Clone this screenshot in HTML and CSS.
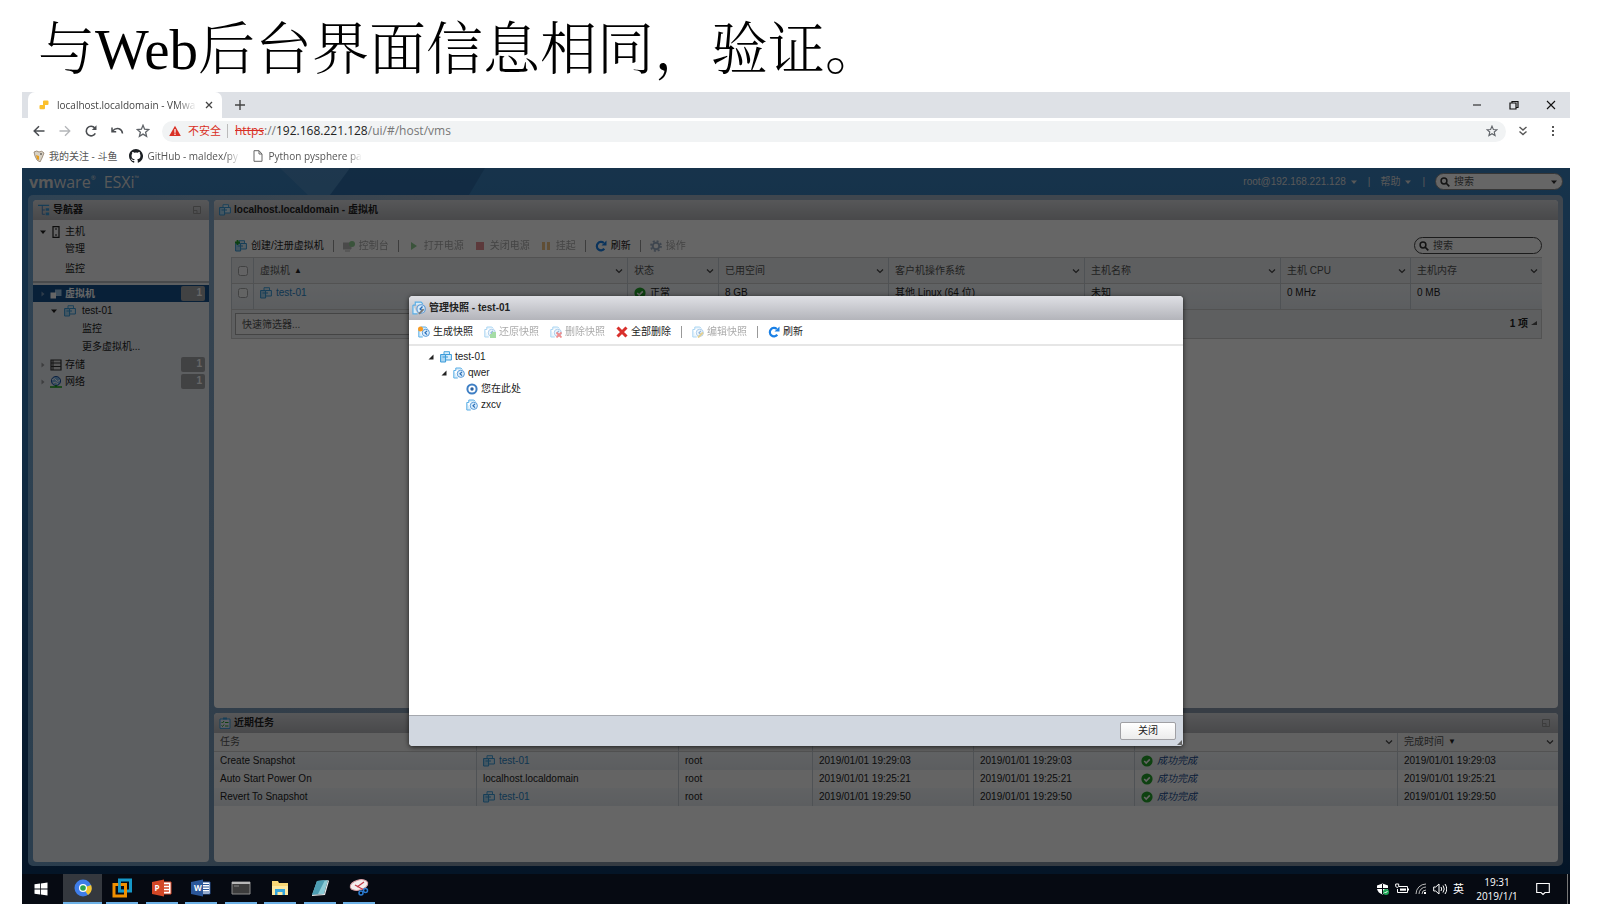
FILE: index.html
```html
<!DOCTYPE html>
<html lang="zh-CN">
<head>
<meta charset="utf-8">
<title>与Web后台界面信息相同，验证。</title>
<link rel="stylesheet" href="styles.css">
</head>
<body>
<svg class="defs" aria-hidden="true">
  <symbol id="vm" viewBox="0 0 12 12"><path d="M4 3V.7h5.500V3" fill="#d6edfb" stroke="#4aa5de"/><path d="M.6 3.500h5v7.500h-5z" fill="#a9d6f3" stroke="#3a9bd9"/><path d="M5.600 3.500h5.800V9H5.600z" fill="#d6edfb" stroke="#3a9bd9"/><path d="M2.500 6h5.500" stroke="#3a9bd9"/></symbol>
  <symbol id="vmw" viewBox="0 0 12 12"><path d="M5 1.500h6.500V8H5z" fill="#9cc6e8"/><path d="M.5 4.500H6v6H.5z" fill="#fff"/></symbol>
  <symbol id="snap" viewBox="0 0 12 12"><path d="M.8 3.500h2v-2.500h5l1.500 1.500M.8 3.500v7.500h4" fill="#d6ecfa" stroke="#5aaee6"/><circle cx="7.800" cy="6.800" r="3.600" fill="#d9ecfb" stroke="#5b9bd8"/><path d="M9 4.800 7 6.800l2 1.800" fill="none" stroke="#2a6db5" stroke-width="1.200"/></symbol>
  <symbol id="refresh" viewBox="0 0 12 12"><path d="M9.300 8.800A4.200 4.200 0 1 1 8.800 3" fill="none" stroke="#1a80e6" stroke-width="2.200"/><path d="M6.500 5.500h5V.5z" fill="#1a80e6"/></symbol>
  <symbol id="ok" viewBox="0 0 12 12"><circle cx="6" cy="6" r="5.600" fill="#25a32b"/><path d="m3.200 6 2 2 3.600-3.600" fill="none" stroke="#fff" stroke-width="1.600"/></symbol>
  <symbol id="chev" viewBox="0 0 8 6"><path d="m1 1.500 3 3 3-3" fill="none" stroke="#444" stroke-width="1.200"/></symbol>
  <symbol id="mag" viewBox="0 0 10 10"><circle cx="4" cy="4" r="2.900" fill="none" stroke="#333" stroke-width="1.500"/><path d="m6 6 3.300 3.300" stroke="#333" stroke-width="1.700"/></symbol>
  <symbol id="down" viewBox="0 0 8 8"><path d="M1 2.500h6L4 6z" fill="currentColor"/></symbol>
  <symbol id="right" viewBox="0 0 8 8"><path d="M2.500 1.500v5L5.500 4z" fill="currentColor"/></symbol>
  <symbol id="open" viewBox="0 0 8 8"><path d="M6.500 1.500v5h-5z" fill="#222"/></symbol>
  <symbol id="min" viewBox="0 0 8 8"><path d="M.5.5h7v7h-7zM1 4.500h3V7" fill="none" stroke="#999"/></symbol>
  <symbol id="star" viewBox="0 0 14 14"><path d="m7 1.300 1.600 3.900 4.200.3-3.200 2.700 1 4.100L7 10.100l-3.600 2.200 1-4.100L1.200 5.500l4.200-.3z" fill="none" stroke="#5f6368" stroke-width="1.300"/></symbol>
</svg>

<h1 class="title">与Web后台界面信息相同，验证。</h1>

<main class="desktop">
  <header class="chrome">
    <div class="tabs">
      <div class="tab">
        <svg class="i10" viewBox="0 0 10 10"><path d="M4 1.500Q4 .5 5 .5h3.500q1 0 1 1V4q0 1-1 1H6v3q0 1.200-1 1.200H1.500q-1 0-1-1V6q0-1 1-1H4z" fill="#fbc02d"/></svg>
        <span class="fade tabname">localhost.localdomain - VMwa</span>
        <button class="bare" aria-label="关闭标签页"><svg class="i8" viewBox="0 0 8 8"><path d="m1 1 6 6M7 1 1 7" stroke="#444" stroke-width="1.300"/></svg></button>
      </div>
      <button class="bare" aria-label="新标签页"><svg class="i10" viewBox="0 0 10 10"><path d="M5 0v10M0 5h10" stroke="#444" stroke-width="1.400"/></svg></button>
      <div class="winbtns">
        <button class="bare" aria-label="最小化"><svg class="i10" viewBox="0 0 10 10"><path d="M1 5h8" stroke="#111"/></svg></button>
        <button class="bare" aria-label="还原"><svg class="i10" viewBox="0 0 10 10"><path d="M1 3h6v6H1zM3 3V1.500h6v6H7" fill="none" stroke="#111" stroke-width="1.200"/></svg></button>
        <button class="bare" aria-label="关闭"><svg class="i10" viewBox="0 0 10 10"><path d="m1 1 8 8M9 1 1 9" stroke="#111" stroke-width="1.100"/></svg></button>
      </div>
    </div>
    <div class="address">
      <button class="bare" aria-label="后退"><svg class="i14" viewBox="0 0 14 14"><path d="M12.500 7h-10M7 2.200 2.200 7 7 11.800" fill="none" stroke="#4a4d51" stroke-width="1.500"/></svg></button>
      <button class="bare" aria-label="前进"><svg class="i14" viewBox="0 0 14 14"><path d="M1.500 7h10M7 2.200 11.800 7 7 11.800" fill="none" stroke="#b4b6b9" stroke-width="1.300"/></svg></button>
      <button class="bare" aria-label="重新加载"><svg class="i14" viewBox="0 0 14 14"><path d="M11.300 9.300A4.800 4.800 0 1 1 10.800 4" fill="none" stroke="#4a4d51" stroke-width="1.600"/><path d="M7.800 6h4.700V1.300z" fill="#4a4d51"/></svg></button>
      <button class="bare" aria-label="撤消"><svg class="i14" viewBox="0 0 14 14"><path d="M2 3.500v4.200h4.200M2.500 7Q5.500 3.800 9 4.800q3.200 1 3.500 4.700" fill="none" stroke="#4a4d51" stroke-width="1.500"/></svg></button>
      <button class="bare" aria-label="收藏"><svg class="i14"><use href="#star"/></svg></button>
      <div class="omnibox">
        <svg class="i12" viewBox="0 0 12 12"><path d="M6 .8 11.800 11H.2z" fill="#d93025"/><path d="M6 4v3.800M6 8.600v1.300" stroke="#fff" stroke-width="1.200"/></svg>
        <span class="unsafe">不安全</span>
        <span class="url"><s>https</s>://<b>192.168.221.128</b>/ui/#/host/vms</span>
        <button class="bare endstar" aria-label="为此页添加书签"><svg class="i12"><use href="#star" /></svg></button>
      </div>
      <button class="bare more" aria-label="扩展"><svg class="i10" viewBox="0 0 10 10"><path d="m1.500 1 3.500 3 3.500-3M1.500 5.500 5 8.500l3.500-3" fill="none" stroke="#555" stroke-width="1.400"/></svg></button>
      <button class="bare" aria-label="菜单"><svg class="i10" viewBox="0 0 10 10"><path d="M4 0h2v2H4zM4 4h2v2H4zM4 8h2v2H4z" fill="#555"/></svg></button>
    </div>
    <nav class="marks">
      <a href="#"><svg class="i12" viewBox="0 0 12 12"><path d="M1 2q3-2 5 0 3-2 5 1L9 8l-2 4-3-2-2-4z" fill="#d8d1c4" stroke="#8a7966" stroke-width=".8"/><path d="m3 5 3 1v4L4 9z" fill="#e59d1d"/><path d="M7 4h2" stroke="#333"/></svg><span>我的关注 - 斗鱼</span></a>
      <a href="#"><svg class="i14" viewBox="0 0 16 16"><path fill="#1b1f23" d="M8 0C3.600 0 0 3.600 0 8c0 3.500 2.300 6.500 5.500 7.600.4.100.5-.2.500-.4v-1.500c-2 .4-2.500-.500-2.700-.9-.1-.2-.5-.9-.8-1.100-.3-.2-.7-.5 0-.5.600 0 1.100.6 1.200.8.700 1.200 1.900.9 2.300.7.100-.5.300-.9.500-1.100-1.800-.2-3.600-.9-3.600-4 0-.9.300-1.600.8-2.100-.1-.2-.4-1 .1-2.100 0 0 .7-.2 2.200.8a7.600 7.600 0 0 1 4 0c1.500-1 2.200-.8 2.200-.8.400 1.100.2 1.900.1 2.100.500.600.8 1.300.8 2.100 0 3.100-1.900 3.700-3.700 3.900.3.300.6.800.6 1.500v2.200c0 .2.100.5.500.4A8 8 0 0 0 8 0"/></svg><span class="fade">GitHub - maldex/py</span></a>
      <a href="#"><svg class="i12" viewBox="0 0 12 12"><path d="M2 .7h5L10 4v7.300H2zM7 .7V4h3" fill="none" stroke="#666"/></svg><span class="fade">Python pysphere pa</span></a>
    </nav>
  </header>

  <section class="app">
    <header class="top">
      <svg class="rays" viewBox="0 0 600 27" preserveAspectRatio="none" aria-hidden="true"><path d="M258 0h70l-20 27h-22z" fill="#fff" opacity=".09"/><path d="M328 0h135l-16 27H308z" fill="#002a60" opacity=".2"/></svg>
      <div class="logo"><span class="vmware"><b>vm</b>ware</span><sup>®</sup><span class="esxi">ESXi</span><sup>™</sup></div>
      <button class="bare user">root@192.168.221.128 <svg class="i8"><use href="#down"/></svg></button>
      <span>|</span>
      <button class="bare help">帮助 <svg class="i8"><use href="#down"/></svg></button>
      <span>|</span>
      <label class="search"><svg class="i10"><use href="#mag"/></svg><input type="search" placeholder="搜索" aria-label="全局搜索"><svg class="i8"><use href="#down"/></svg></label>
    </header>

    <div class="shell">
      <nav class="panel nav">
        <h2 class="bar"><svg class="i12" viewBox="0 0 14 14"><path d="M0 1.500h13" stroke="#3a9bd9" stroke-width="1.500"/><path d="M5 2v10h3M5 7h3" fill="none" stroke="#3a7ab8"/><path d="M9 5h4v3H9zM9 10h4v3H9z" fill="#3a9bd9"/></svg>导航器<svg class="i8 end"><use href="#min"/></svg></h2>
        <div class="group">
          <div class="row"><svg class="i8"><use href="#down"/></svg><svg class="i12" viewBox="0 0 12 12"><path d="M3 .6h6v10.800H3zM5 3h2M5 9h2" fill="none" stroke="#222" stroke-width="1.200"/></svg>主机</div>
          <div class="row sub">管理</div>
          <div class="row sub tall">监控</div>
        </div>
        <div class="row on"><svg class="i8 faint"><use href="#right"/></svg><svg class="i12"><use href="#vmw"/></svg>虚拟机<span class="badge">1</span></div>
        <div class="row child"><svg class="i8"><use href="#down"/></svg><svg class="i12"><use href="#vm"/></svg>test-01</div>
        <div class="row sub2">监控</div>
        <div class="row sub2">更多虚拟机...</div>
        <div class="row"><svg class="i8 faint"><use href="#right"/></svg><svg class="i12" viewBox="0 0 12 12"><path d="M1 1h10v10H1zM1 4h10M1 7.500h10" fill="#ddd" stroke="#333" stroke-width="1.200"/><path d="M3 1v10" stroke="#333"/></svg>存储<span class="badge">1</span></div>
        <div class="row"><svg class="i8 faint"><use href="#right"/></svg><svg class="i12" viewBox="0 0 12 12"><circle cx="6" cy="5" r="4.600" fill="#7fb8ec" stroke="#2456a5"/><path d="M2 4q3-3 4 0t4 0M3 7q3-2 5 1" stroke="#fff" fill="none"/><path d="M0 11h12M6 9v2" stroke="#18a018" stroke-width="1.600"/></svg>网络<span class="badge">1</span></div>
      </nav>

      <div class="right">
        <section class="panel vms">
          <h2 class="bar"><svg class="i12"><use href="#vm"/></svg>localhost.localdomain - 虚拟机</h2>
          <div class="vmbody">
            <div class="tools">
              <button class="tool"><svg class="i12"><use href="#vm"/><path d="M0 2.500h5M2.500 0v5" stroke="#25a32b" stroke-width="1.800"/></svg>创建/注册虚拟机</button><i class="sep"></i>
              <button class="tool" disabled><svg class="i12" viewBox="0 0 12 12"><path d="M0 3h8v6H0zM2 11h5" fill="#777" stroke="#777"/><circle cx="9" cy="4" r="3" fill="#25a32b"/></svg>控制台</button><i class="sep"></i>
              <button class="tool" disabled><svg class="i12" viewBox="0 0 12 12"><path d="M3 2v8l6-4z" fill="#25a32b"/></svg>打开电源</button>
              <button class="tool" disabled><svg class="i12" viewBox="0 0 12 12"><path d="M2 2h8v8H2z" fill="#d0202a"/></svg>关闭电源</button>
              <button class="tool" disabled><svg class="i12" viewBox="0 0 12 12"><path d="M2 2h3v8H2zM7 2h3v8H7z" fill="#e08a10"/></svg>挂起</button><i class="sep"></i>
              <button class="tool"><svg class="i12"><use href="#refresh"/></svg>刷新</button><i class="sep"></i>
              <button class="tool" disabled><svg class="i12" viewBox="0 0 12 12"><circle cx="6" cy="6" r="3.300" fill="none" stroke="#41638f" stroke-width="2"/><circle cx="6" cy="6" r="5" fill="none" stroke="#41638f" stroke-width="1.800" stroke-dasharray="2 1.930"/></svg>操作</button>
              <label class="search"><svg class="i10"><use href="#mag"/></svg><input type="search" placeholder="搜索" aria-label="搜索虚拟机"></label>
            </div>
            <table class="grid">
              <colgroup><col class="w22"><col><col class="w91"><col class="w170"><col class="w196"><col class="w196"><col class="w130"><col class="w132"></colgroup>
              <thead><tr>
                <th><input type="checkbox" aria-label="全选"></th>
                <th><div>虚拟机<small>▲</small><svg class="chev"><use href="#chev"/></svg></div></th>
                <th><div>状态<svg class="chev"><use href="#chev"/></svg></div></th>
                <th><div>已用空间<svg class="chev"><use href="#chev"/></svg></div></th>
                <th><div>客户机操作系统<svg class="chev"><use href="#chev"/></svg></div></th>
                <th><div>主机名称<svg class="chev"><use href="#chev"/></svg></div></th>
                <th><div>主机 CPU<svg class="chev"><use href="#chev"/></svg></div></th>
                <th><div>主机内存<svg class="chev"><use href="#chev"/></svg></div></th>
              </tr></thead>
              <tbody><tr>
                <td><input type="checkbox" aria-label="选择 test-01"></td>
                <td><a href="#"><svg class="i12"><use href="#vm"/></svg>test-01</a></td>
                <td><span class="st"><svg class="i12"><use href="#ok"/></svg>正常</span></td>
                <td>8 GB</td><td>其他 Linux (64 位)</td><td>未知</td><td>0 MHz</td><td>0 MB</td>
              </tr></tbody>
            </table>
            <div class="filter"><input type="text" placeholder="快速筛选器..." aria-label="快速筛选器"><b>1 项</b><svg class="i8"><path d="M7 1v4H1z" fill="#555"/></svg></div>
          </div>
        </section>

        <section class="panel recent">
          <h2 class="bar"><svg class="i12" viewBox="0 0 12 12"><path d="M1 2h10v9.400H1z" fill="#eef" stroke="#3a9bd9"/><path d="M4 .5h4v2H4z" fill="#3a9bd9"/><path d="m2.500 5 1 1 1.500-2M2.500 8.500l1 1 1.500-2M6 5.500h3.500M6 9h3.500" fill="none" stroke="#25a32b"/></svg>近期任务<svg class="i8 end"><use href="#min"/></svg></h2>
          <table class="grid tasks">
            <colgroup><col><col class="w202"><col class="w134"><col class="w161"><col class="w161"><col class="w263"><col class="w161"></colgroup>
            <thead><tr><th>任务</th><th></th><th></th><th></th><th></th><th><div><svg class="chev"><use href="#chev"/></svg></div></th><th><div>完成时间<small>▼</small><svg class="chev"><use href="#chev"/></svg></div></th></tr></thead>
            <tbody>
              <tr><td>Create Snapshot</td><td><a href="#"><svg class="i12"><use href="#vm"/></svg>test-01</a></td><td>root</td><td>2019/01/01 19:29:03</td><td>2019/01/01 19:29:03</td><td><span class="st done"><svg class="i12"><use href="#ok"/></svg><em>成功完成</em></span></td><td>2019/01/01 19:29:03</td></tr>
              <tr><td>Auto Start Power On</td><td>localhost.localdomain</td><td>root</td><td>2019/01/01 19:25:21</td><td>2019/01/01 19:25:21</td><td><span class="st done"><svg class="i12"><use href="#ok"/></svg><em>成功完成</em></span></td><td>2019/01/01 19:25:21</td></tr>
              <tr><td>Revert To Snapshot</td><td><a href="#"><svg class="i12"><use href="#vm"/></svg>test-01</a></td><td>root</td><td>2019/01/01 19:29:50</td><td>2019/01/01 19:29:50</td><td><span class="st done"><svg class="i12"><use href="#ok"/></svg><em>成功完成</em></span></td><td>2019/01/01 19:29:50</td></tr>
            </tbody>
          </table>
        </section>
      </div>
    </div>

    <div class="overlay">
      <section class="dialog" role="dialog" aria-labelledby="dlg">
        <h2 id="dlg"><svg class="i14" viewBox="0 0 12 12"><use href="#snap"/><path d="m6 11 4-4" stroke="#777" stroke-width="1.600"/></svg>管理快照 - test-01</h2>
        <div class="dtools">
          <button class="tool"><svg class="i12"><use href="#snap"/><circle cx="2.500" cy="3" r="2.500" fill="#f59a23"/></svg>生成快照</button>
          <button class="tool" disabled><svg class="i12"><use href="#snap"/><path d="M6 12V8h2V6h4v6z" fill="#4dbb4d"/></svg>还原快照</button>
          <button class="tool" disabled><svg class="i12"><use href="#snap"/><path d="m6.500 6.500 5 5m0-5-5 5" stroke="#e02020" stroke-width="1.800"/></svg>删除快照</button>
          <button class="tool"><svg class="i12" viewBox="0 0 12 12"><path d="m1.500 1.500 9 9m0-9-9 9" stroke="#d9302c" stroke-width="3"/></svg>全部删除</button><i class="sep"></i>
          <button class="tool" disabled><svg class="i12"><use href="#snap"/><path d="m6 11.500 5-5" stroke="#c9a227" stroke-width="2"/></svg>编辑快照</button><i class="sep"></i>
          <button class="tool"><svg class="i12"><use href="#refresh"/></svg>刷新</button>
        </div>
        <ul class="tree">
          <li><svg class="i8"><use href="#open"/></svg><svg class="i12"><use href="#vm"/></svg>test-01</li>
          <li class="l2"><svg class="i8"><use href="#open"/></svg><svg class="i12"><use href="#snap"/></svg>qwer</li>
          <li class="l3"><svg class="i12" viewBox="0 0 12 12"><circle cx="6" cy="6" r="4.600" fill="#fff" stroke="#3f7fc4" stroke-width="2"/><circle cx="6" cy="6" r="1.700" fill="#2a5f9e"/></svg>您在此处</li>
          <li class="l3"><svg class="i12"><use href="#snap"/></svg>zxcv</li>
        </ul>
        <footer><button class="close">关闭</button><svg class="grip i8" viewBox="0 0 8 8"><path d="M7 2v5H2z" fill="#666"/></svg></footer>
      </section>
    </div>
  </section>

  <footer class="taskbar">
    <button class="bare start" aria-label="开始"><svg class="i14" viewBox="0 0 14 14"><path d="M.5 2.300 6 1.600v5H.5zM6.800 1.500l6.700-.9v6H6.800zM.5 7.400H6v5l-5.500-.7zM6.800 7.400h6.700v6l-6.700-.9z" fill="#fff"/></svg></button>
    <button class="bare chr" aria-label="浏览器"><svg class="i18" viewBox="0 0 18 18"><circle cx="9" cy="9" r="8.500" fill="#3f7de8"/><path d="M9 9 17 6a8.500 8.500 0 0 1-3 10z" fill="#f4c430"/><circle cx="9" cy="9" r="4" fill="#fff"/><circle cx="9" cy="9" r="2.800" fill="#2da44e"/></svg></button>
    <div class="apps">
      <button class="bare" aria-label="VMware"><svg class="i20" viewBox="0 0 20 20"><path d="M7.500 2h11v11h-11z" fill="none" stroke="#1598c8" stroke-width="3"/><path d="M2 6.500h11.500v11.500H2z" fill="none" stroke="#f09000" stroke-width="3"/><path d="M7.500 5v8h4" fill="none" stroke="#1598c8" stroke-width="2.500"/></svg></button>
      <button class="bare" aria-label="PowerPoint"><svg class="i20" viewBox="0 0 20 20"><path d="M10 4h9v12h-9z" fill="#fff" stroke="#d24726"/><path d="M12 7h5M12 10h5M12 13h5" stroke="#d24726" stroke-width="1.500"/><path d="m0 4 12-2.500v17L0 16z" fill="#d24726"/></svg><span class="ltr">P</span></button>
      <button class="bare" aria-label="Word"><svg class="i20" viewBox="0 0 20 20"><path d="M10 4h9v12h-9z" fill="#fff" stroke="#2b579a"/><path d="M12 6.500h6M12 9h6M12 11.500h6M12 14h6" stroke="#2b579a"/><path d="m0 4 12-2.500v17L0 16z" fill="#2b579a"/></svg><span class="ltr">W</span></button>
      <button class="bare" aria-label="命令提示符"><svg class="i20" viewBox="0 0 20 20"><path d="M1 4h18v12H1z" fill="#3c3c3c" stroke="#8a8a8a"/><path d="M1 4h18v2H1z" fill="#b8b8b8"/><path d="M3 8h5" stroke="#888"/></svg></button>
      <button class="bare" aria-label="文件资源管理器"><svg class="i20" viewBox="0 0 20 20"><path d="M2 3h6l1 2h9v12H2z" fill="#f8d775"/><path d="M2 8h16v9H2z" fill="#fde9a0"/><path d="M5 17v-6h10v6h-2.500v-3h-5v3z" fill="#35a5dc"/></svg></button>
      <button class="bare" aria-label="记事本"><svg class="i20" viewBox="0 0 20 20"><path d="m7 3 11-1-4 14-12 1z" fill="#8ccbd6"/><path d="m7 3 8-1-7 14-6 1z" fill="#4d9db2"/><path d="m18 2 1 1-4 14-13 1v-1l12-1z" fill="#e4e8ea"/></svg></button>
      <button class="bare" aria-label="截图工具"><svg class="i20" viewBox="0 0 20 20"><ellipse cx="10" cy="7" rx="9" ry="5" transform="rotate(-15 10 7)" fill="#f4eeee" stroke="#d8a0a6"/><path d="m8 9 7-5M6 7l9 5" stroke="#c33b4a" stroke-width="1.300"/><circle cx="12" cy="15" r="2" fill="none" stroke="#2b7bd0" stroke-width="1.500"/><circle cx="16.500" cy="12.500" r="2" fill="none" stroke="#2b7bd0" stroke-width="1.500"/></svg></button>
    </div>
    <div class="tray">
      <svg class="i12" viewBox="0 0 12 12"><path d="M0 2.500 5.500.5l5.500 2V6q-1 4-5.500 5.500Q1 10 0 6z" fill="#fff"/><path d="M5.500 1v10M0 5.500h11" stroke="#05080f"/><circle cx="9" cy="9" r="3" fill="#21a658"/><path d="m7.500 9 1 1 2-2" stroke="#fff" fill="none"/></svg>
      <svg class="i14" viewBox="0 0 14 14"><path d="M4 4.500h8.500v6H2.500V7M13.500 6.500v2M.7 2v2.500q1.500 2 3 0V2z" fill="none" stroke="#fff"/><path d="M5 6.500h6v2.200H5z" fill="#fff"/></svg>
      <svg class="i12" viewBox="0 0 12 12"><path d="M1 11A10 10 0 0 1 11 1M4 11a7 7 0 0 1 7-7M7 11a4 4 0 0 1 4-4" fill="none" stroke="#bbb"/><path d="M9 9h2v2H9z" fill="#fff"/></svg>
      <svg class="i14" viewBox="0 0 14 14"><path d="M.7 5h2L6 2v10L2.700 9h-2zM8 5q1.500 2 0 4M10 3.500q2.500 3.500 0 7M12 2q3.500 5 0 10" fill="none" stroke="#fff"/></svg>
      <span class="ime">英</span>
      <time>19:31<br>2019/1/1</time>
      <svg class="i14" viewBox="0 0 14 14"><path d="M.7 1.500h12.600v9H9l-2 2-2-2H.7z" fill="none" stroke="#fff" stroke-width="1.100"/></svg>
      <i class="peek"></i>
    </div>
  </footer>
</main>
</body>
</html>
```
FILE: styles.css
```css
* { box-sizing: border-box; }
body {
  margin: 0;
  min-height: 100vh;
  display: flex;
  flex-direction: column;
  padding: 10px 40px 8px 22px;
  background: #fff;
  font: 10px/14px "Liberation Sans", "Noto Sans CJK SC", sans-serif;
  color: #222;
}
h1, h2, ul { margin: 0; padding: 0; }
a { color: #2a86c8; text-decoration: none; }
svg { flex: none; display: block; }
input { font: inherit; min-width: 0; }
button { font: inherit; color: inherit; }
.defs { position: absolute; width: 0; height: 0; }
.i8 { width: 8px; height: 8px; }
.i10 { width: 10px; height: 10px; }
.i12 { width: 12px; height: 12px; }
.i14 { width: 14px; height: 14px; }
.i18 { width: 18px; height: 18px; }
.i20 { width: 20px; height: 20px; }
.bare {
  display: flex; align-items: center; justify-content: center;
  border: 0; padding: 0; background: none;
}

.title {
  height: 82px;
  padding-left: 16px;
  font: 300 57px/80px "Liberation Serif", "Noto Serif CJK SC", "Noto Sans CJK SC", serif;
  color: #000;
  white-space: nowrap;
}
.desktop { flex: 1; display: flex; flex-direction: column; }

/* browser */
.chrome { font-family: "Open Sans", "Noto Sans CJK SC", sans-serif; color: #444; }
.tabs { display: flex; align-items: stretch; gap: 13px; height: 26px; padding-left: 6px; background: #dee1e6; }
.tab {
  display: flex; align-items: center; gap: 8px;
  width: 194px; padding: 0 9px 0 11px;
  background: #fff; border-radius: 7px 7px 0 0;
}
.tabname { flex: 1; }
.fade { white-space: nowrap; mask-image: linear-gradient(to right, #000 85%, transparent); }
.winbtns { display: flex; gap: 27px; margin-left: auto; padding-right: 14px; }
.address { display: flex; align-items: center; gap: 12px; height: 26px; padding: 0 12px 0 10px; }
.omnibox {
  flex: 1; display: flex; align-items: center; gap: 7px;
  height: 21px; padding: 0 8px 0 7px; border-radius: 11px;
  background: #f1f3f4; font-size: 11px;
}
.unsafe { color: #d93025; padding-right: 6px; border-right: 1px solid #bbb; }
.url { color: #777; font-size: 12px; }
.url s { color: #d93025; }
.url b { font-weight: 400; color: #222; }
.endstar { margin-left: auto; }
.more { margin-right: 8px; }
.marks { display: flex; align-items: center; gap: 12px; height: 24px; padding-left: 11px; }
.marks a { display: flex; align-items: center; gap: 4px; color: #555; }
.marks .fade { min-width: 93px; }

/* host client */
.app {
  position: relative; flex: 1; display: flex; flex-direction: column;
  padding: 0 7px 8px 6px;
  background: linear-gradient(to bottom, #3a80bc, #2c6ea8 40%, #0c3562);
}
.top { display: flex; align-items: center; gap: 10px; height: 27px; color: #ddd; }
.rays { position: absolute; left: 0; top: 0; width: 600px; height: 27px; }
.logo { display: flex; align-items: center; margin-right: auto; padding-left: 1px; font: 16px/20px "Open Sans", sans-serif; }
.logo sup { align-self: flex-start; font-size: 6px; line-height: 12px; }
.esxi { padding-left: 8px; }
.user, .help { gap: 4px; }
.search {
  display: flex; align-items: center; gap: 4px;
  width: 128px; height: 17px; padding: 0 4px;
  border: 1px solid #888; border-radius: 9px; background: #fff; color: #333;
}
.search input { flex: 1; border: 0; padding: 0; background: none; outline: 0; }
.search input::placeholder, .filter input::placeholder { color: #555; opacity: 1; }
.shell {
  flex: 1; display: flex; gap: 5px; padding: 5px 5px 4px;
  border-radius: 5px;
  background: linear-gradient(to right, rgba(90, 160, 215, .6), rgba(90, 160, 215, 0) 30%), linear-gradient(to bottom, #9fb0c4, #8593a5);
}
.panel { border-radius: 4px; overflow: hidden; background: #fff; }
.bar {
  display: flex; align-items: center; gap: 3px; height: 20px; padding: 0 8px 0 5px;
  font-size: 10px; line-height: 14px;
  background: linear-gradient(#d9dade, #b5b6ba);
}
.end { margin-left: auto; }
.nav { width: 176px; background: #e9edf2; }
.row { display: flex; align-items: center; gap: 3px; height: 17px; padding: 0 4px 0 6px; }
.group { padding-top: 3px; margin-bottom: 2px; border-bottom: 2px solid #b4b8be; background: #f4f5f7; }
.sub { padding-left: 32px; }
.tall { height: 24px; }
.on { background: #15508c; color: #fff; font-weight: 700; }
.faint { opacity: .4; }
.badge {
  margin-left: auto; width: 24px; height: 15px; padding-right: 3px; border-radius: 2px;
  background: #a3a5a9; color: #fff; font-weight: 700; text-align: right;
}
.child { padding-left: 17px; gap: 6px; height: 18px; }
.sub2 { padding-left: 49px; height: 18px; }
.right { flex: 1; min-width: 0; display: flex; flex-direction: column; gap: 5px; }
.vms { flex: 1; }
.vmbody { padding: 14px 16px 0 17px; }
.tools { display: flex; align-items: center; gap: 10px; height: 23px; padding-left: 4px; }
.tool { display: flex; align-items: center; gap: 4px; border: 0; padding: 0; background: none; white-space: nowrap; }
.tool:disabled { color: #555; opacity: .5; }
.sep { width: 1px; height: 12px; margin: 0 -1px; background: #999; }
.tools .search { margin-left: auto; border-color: #444; }
.grid { width: 100%; table-layout: fixed; border-collapse: separate; border-spacing: 0; background: #fff; }
.grid th, .grid td { padding: 0 6px; text-align: left; font-weight: 400; border-left: 1px solid #c6ccd4; white-space: nowrap; }
.grid th { height: 27px; padding-right: 4px; background: #ebedf0; border-top: 1px solid #ccc; border-bottom: 1px solid #ccc; color: #555; }
.grid td { height: 25px; padding-bottom: 8px; background: linear-gradient(#f2f5f9, #e6ebf0); }
.grid th > div, .grid a, .st { display: flex; align-items: center; gap: 4px; }
.grid small { font-size: 8px; color: #222; }
.grid input { display: block; width: 10px; height: 10px; margin: 0; opacity: .6; }
.chev { width: 8px; height: 6px; margin-left: auto; }
.w22 { width: 22px; } .w91 { width: 91px; } .w130 { width: 130px; } .w132 { width: 132px; }
.w134 { width: 134px; } .w161 { width: 161px; } .w170 { width: 170px; }
.w196 { width: 196px; } .w202 { width: 202px; } .w263 { width: 263px; }
.filter {
  display: flex; align-items: center; gap: 2px; height: 30px; padding: 3px;
  border: 1px solid #ccc; background: #ebedf0;
}
.filter input { width: 240px; height: 22px; margin-right: auto; padding: 0 6px; border: 1px solid #aaa; background: #f7f7f7; }
.recent { height: 149px; }
.tasks th { height: 19px; background: #f2f2f3; border-top: 0; }
.tasks td { height: 18px; padding-bottom: 0; }
.tasks th:first-child, .tasks td:first-child { border-left: 0; }
.tasks tr:nth-child(even) td { background: #f9f9f9; }
.done { color: #1d4f91; }

/* snapshot dialog */
.overlay {
  position: absolute; inset: 0; display: flex; align-items: center; justify-content: center;
  background: rgba(0, 0, 0, .6);
}
.dialog {
  display: flex; flex-direction: column; width: 50%; min-height: 450px;
  border-radius: 4px; overflow: hidden; background: #fff;
  box-shadow: 0 1px 5px rgba(0, 0, 0, .7);
}
.dialog h2 {
  display: flex; align-items: center; gap: 3px; height: 24px; padding: 0 3px;
  font-size: 10px; line-height: 14px; background: linear-gradient(#dfe0e5, #b3b4ba);
}
.dtools { display: flex; align-items: center; gap: 11px; height: 26px; padding-left: 9px; border-bottom: 2px solid #e6e6e6; }
.dtools .tool { gap: 3px; }
.tree { flex: 1; padding: 3px 18px; list-style: none; }
.tree li { display: flex; align-items: center; gap: 3px; height: 16px; }
.tree .i8 { margin-right: 2px; }
.tree .l2 { padding-left: 13px; }
.tree .l3 { padding-left: 39px; }
.dialog footer {
  position: relative; display: flex; align-items: center; justify-content: flex-end;
  height: 31px; padding-right: 7px; border-top: 1px solid #a5a8ae; background: #d1d7e0;
}
.close { width: 56px; height: 18px; padding: 0; border: 1px solid #a0a0a4; border-radius: 2px; background: linear-gradient(#fff, #ececec); }
.grip { position: absolute; right: 0; bottom: 0; }

/* taskbar */
.taskbar { display: flex; height: 30px; background: #060a12; color: #fff; font: 10px/14px "Open Sans", "Noto Sans CJK SC", sans-serif; }
.start { width: 41px; padding-right: 3px; }
.chr { width: 39px; background: #34383e; border-bottom: 2px solid #6db1e6; margin-right: 4px; }
.apps { display: flex; justify-content: space-between; width: 269px; }
.apps button { position: relative; width: 32px; border-bottom: 2px solid #6db1e6; }
.ltr { position: absolute; left: 9px; top: 7px; font-size: 8px; font-weight: 700; color: #fff; }
.tray { display: flex; align-items: center; gap: 6px; margin-left: auto; }
.ime { font-size: 11px; }
.tray time { width: 54px; text-align: center; }
.tray > .i14:nth-last-child(2) { margin: 0 11px 0 6px; }
.peek { width: 1px; align-self: stretch; margin-right: 2px; background: #777; }
```
